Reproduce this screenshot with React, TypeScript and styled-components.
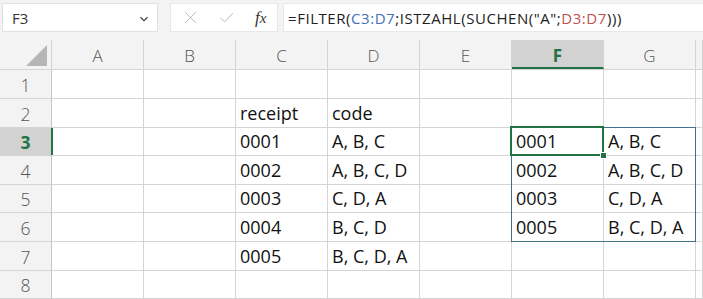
import styled, { createGlobalStyle } from 'styled-components';

const GlobalStyle = createGlobalStyle`
  html, body {
    margin: 0;
    padding: 0;
    background: #ffffff;
    overflow: hidden;
  }
  body {
    font-family: 'Open Sans', 'Noto Sans', sans-serif;
  }
`;

const COLS = ['A', 'B', 'C', 'D', 'E', 'F', 'G'];
const ROW_H = [29, 29, 28, 29, 28, 29, 29, 28];

// cell content keyed as "C3"
const CELLS: Record<string, string> = {
  C2: 'receipt', D2: 'code',
  C3: '0001', D3: 'A, B, C',
  C4: '0002', D4: 'A, B, C, D',
  C5: '0003', D5: 'C, D, A',
  C6: '0004', D6: 'B, C, D',
  C7: '0005', D7: 'B, C, D, A',
  F3: '0001', G3: 'A, B, C',
  F4: '0002', G4: 'A, B, C, D',
  F5: '0003', G5: 'C, D, A',
  F6: '0005', G6: 'B, C, D, A',
};

const ACTIVE_COL = 'F';
const ACTIVE_ROW = 3;

// spill range F3:G6
function spillEdges(col: string, row: number) {
  const ci = COLS.indexOf(col);
  const inRange = ci >= 5 && ci <= 6 && row >= 3 && row <= 6;
  if (!inRange) return null;
  return {
    top: row === 3,
    bottom: row === 6,
    left: ci === 5,
    right: ci === 6,
  };
}

export default function App() {
  return (
    <>
      <GlobalStyle />
      <Window>
        <FormulaBar>
          <NameBox>
            <span>F3</span>
            <Chevron viewBox="0 0 10 6">
              <path d="M1.5 1.2 L5 4.6 L8.5 1.2" fill="none" stroke="#444" strokeWidth="1.3" />
            </Chevron>
          </NameBox>
          <Grip>
            <i />
            <i />
            <i />
          </Grip>
          <ActionBox>
            <ActionIcon viewBox="0 0 20 20">
              <path d="M3 3 L17 17 M17 3 L3 17" stroke="#b9b9b9" strokeWidth="1.3" fill="none" />
            </ActionIcon>
            <ActionIcon viewBox="0 0 20 20">
              <path d="M2 10.5 L7.5 16 L18.5 4" stroke="#b9b9b9" strokeWidth="1.3" fill="none" />
            </ActionIcon>
            <Fx>
              f<sub>x</sub>
            </Fx>
          </ActionBox>
          <FormulaInput>
            =FILTER(<RefBlue>C3:D7</RefBlue>;ISTZAHL(SUCHEN("A";<RefRed>D3:D7</RefRed>)))
          </FormulaInput>
        </FormulaBar>

        <Sheet>
          <HeaderRow>
            <Corner>
              <CornerTriangle />
            </Corner>
            {COLS.map((c) => (
              <ColHeader key={c} $active={c === ACTIVE_COL}>
                {c}
              </ColHeader>
            ))}
            <ColHeader $active={false} />
          </HeaderRow>

          {ROW_H.map((h, i) => {
            const row = i + 1;
            return (
              <Row key={row} style={{ height: h }}>
                <RowHeader $active={row === ACTIVE_ROW}>{row}</RowHeader>
                {COLS.map((c) => {
                  const key = `${c}${row}`;
                  const edges = spillEdges(c, row);
                  const isActive = c === ACTIVE_COL && row === ACTIVE_ROW;
                  return (
                    <Cell key={key} $leftActive={c === 'A' && row === ACTIVE_ROW}>
                      {CELLS[key]}
                      {edges && (
                        <Spill
                          $top={edges.top}
                          $bottom={edges.bottom}
                          $left={edges.left}
                          $right={edges.right}
                        />
                      )}
                      {isActive && (
                        <Selection>
                          <FillHandle />
                        </Selection>
                      )}
                    </Cell>
                  );
                })}
                <Cell $leftActive={false} />
              </Row>
            );
          })}
        </Sheet>
      </Window>
    </>
  );
}

/* ---- styled ---- */

const Window = styled.div`
  width: 703px;
  height: 299px;
  overflow: hidden;
  background: #fff;
`;

const FormulaBar = styled.div`
  display: flex;
  align-items: stretch;
  height: 29px;
  padding: 3px 0 8px 2px;
  background: #f3f3f3;
  box-sizing: content-box;
`;

const NameBox = styled.div`
  width: 156px;
  box-sizing: border-box;
  display: flex;
  align-items: center;
  justify-content: space-between;
  padding: 0 8px 0 9px;
  background: #fff;
  border: 1px solid #e1e1e1;
  font-size: 15px;
  color: #333;
`;

const Chevron = styled.svg`
  width: 10px;
  height: 6px;
  margin-top: 3px;
`;

const Grip = styled.div`
  width: 12px;
  display: flex;
  flex-direction: column;
  align-items: center;
  justify-content: center;
  gap: 2px;

  i {
    display: block;
    width: 2px;
    height: 2px;
    background: #f3f3f3;
  }
`;

const ActionBox = styled.div`
  width: 108px;
  box-sizing: border-box;
  display: flex;
  align-items: center;
  gap: 21px;
  padding-left: 12px;
  background: #fff;
  border: 1px solid #e8e8e8;
`;

const ActionIcon = styled.svg`
  width: 15px;
  height: 15px;
`;

const Fx = styled.span`
  font-family: 'Liberation Serif', 'DejaVu Serif', serif;
  font-style: italic;
  font-size: 17px;
  color: #333;
  line-height: 1;

  sub {
    font-size: 15px;
    vertical-align: baseline;
    position: relative;
    top: 0;
  }
`;

const FormulaInput = styled.div`
  flex: 1;
  margin-left: 5px;
  display: flex;
  align-items: center;
  padding-left: 4px;
  background: #fff;
  border: 1px solid #e8e8e8;
  border-right: none;
  font-size: 15px;
  color: #222;
  white-space: pre;
  letter-spacing: 0.55px;
`;

const RefBlue = styled.span`
  color: #4472b8;
`;

const RefRed = styled.span`
  color: #c0504d;
`;

const Sheet = styled.div`
  display: flex;
  flex-direction: column;
`;

const HeaderRow = styled.div`
  display: grid;
  grid-template-columns: 52px repeat(7, 92px) 1fr;
  height: 30px;
  background: #f3f3f3;
  border-bottom: 1px solid #d4d4d4;
  box-sizing: border-box;
`;

const Corner = styled.div`
  position: relative;
  border-right: 1px solid #d4d4d4;
`;

const CornerTriangle = styled.div`
  position: absolute;
  right: 4px;
  bottom: 3px;
  width: 0;
  height: 0;
  border-left: 21px solid transparent;
  border-bottom: 21px solid #b6b6b6;
`;

const ColHeader = styled.div<{ $active: boolean }>`
  display: flex;
  align-items: center;
  justify-content: center;
  box-sizing: border-box;
  border-right: 1px solid #d4d4d4;
  font-size: 17px;
  color: ${(p) => (p.$active ? '#217346' : '#555')};
  font-weight: ${(p) => (p.$active ? 700 : 300)};
  background: ${(p) => (p.$active ? '#d2d2d2' : 'transparent')};
  border-bottom: ${(p) => (p.$active ? '2px solid #217346' : 'none')};
  padding-top: ${(p) => (p.$active ? '4px' : '2px')};
`;

const Row = styled.div`
  display: grid;
  grid-template-columns: 52px repeat(7, 92px) 1fr;
  box-sizing: border-box;
`;

const RowHeader = styled.div<{ $active: boolean }>`
  display: flex;
  align-items: center;
  justify-content: center;
  box-sizing: border-box;
  padding-top: 1px;
  border-bottom: 1px solid #d4d4d4;
  border-right: 1px solid ${(p) => (p.$active ? '#217346' : '#c6c6c6')};
  background: ${(p) => (p.$active ? '#d2d2d2' : '#f3f3f3')};
  font-size: 17.5px;
  font-weight: ${(p) => (p.$active ? 700 : 300)};
  color: ${(p) => (p.$active ? '#217346' : '#555')};
`;

const Cell = styled.div<{ $leftActive: boolean }>`
  position: relative;
  display: flex;
  align-items: flex-end;
  box-sizing: border-box;
  padding: 0 0 2px 4px;
  border-right: 1px solid #d4d4d4;
  border-bottom: 1px solid #d4d4d4;
  font-size: 18px;
  color: #111;
  white-space: nowrap;
  line-height: 24px;
  box-shadow: ${(p) => (p.$leftActive ? 'inset 2px 0 0 #217346' : 'none')};
  margin-left: ${(p) => (p.$leftActive ? '-1px' : '0')};
`;

const Spill = styled.div<{ $top: boolean; $bottom: boolean; $left: boolean; $right: boolean }>`
  position: absolute;
  left: -1px;
  top: -1px;
  right: -1px;
  bottom: -1px;
  pointer-events: none;
  border-style: solid;
  border-color: #40708f;
  border-top-width: ${(p) => (p.$top ? '1px' : '0')};
  border-bottom-width: ${(p) => (p.$bottom ? '1px' : '0')};
  border-left-width: ${(p) => (p.$left ? '1px' : '0')};
  border-right-width: ${(p) => (p.$right ? '1px' : '0')};
`;

const Selection = styled.div`
  position: absolute;
  left: -2px;
  top: -2px;
  right: -1px;
  bottom: -1px;
  border: 2px solid #217346;
  pointer-events: none;
  z-index: 2;
`;

const FillHandle = styled.div`
  position: absolute;
  right: -5px;
  bottom: -5px;
  width: 7px;
  height: 7px;
  background: #217346;
  border: 1px solid #fff;
  box-sizing: border-box;
`;
